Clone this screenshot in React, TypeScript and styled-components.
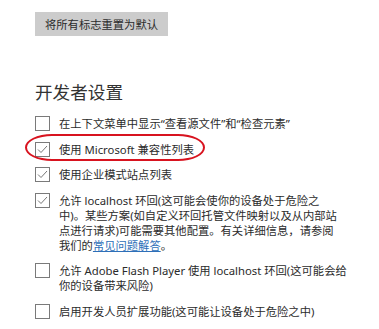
import styled, { createGlobalStyle } from "styled-components";

const GlobalStyle = createGlobalStyle`
    html, body {
        margin: 0;
        padding: 0;
        background: #ffffff;
    }
    body {
        font-family: "Noto Sans", "Noto Sans CJK SC", sans-serif;
        color: #2b2b2b;
    }
`;

const Page = styled.div`
    padding: 12px 0 0 35px;
    width: 379px;
    height: 329px;
    box-sizing: border-box;
    overflow: hidden;
`;

const ResetButton = styled.button`
    display: flex;
    align-items: center;
    justify-content: center;
    width: 133px;
    height: 24px;
    padding: 0;
    border: none;
    background: #cccccc;
    color: #2b2b2b;
    font-family: "Noto Sans CJK SC", sans-serif;
    font-size: 11.3px;
`;

const Heading = styled.h2`
    margin: 44px 0 12px;
    font-family: "Noto Sans CJK SC", sans-serif;
    font-weight: 400;
    font-size: 17.6px;
    line-height: 24px;
    color: #333333;
`;

const List = styled.div`
    display: flex;
    flex-direction: column;
    gap: 10.5px;
`;

const Row = styled.label`
    position: relative;
    display: flex;
    align-items: flex-start;
    gap: 9px;
`;

const Box = styled.span`
    flex: none;
    width: 15px;
    height: 15px;
    box-sizing: border-box;
    border: 1px solid #7a7a7a;
    background: #ffffff;
    display: flex;
    align-items: center;
    justify-content: center;
`;

const Label = styled.span`
    font-size: 11.3px;
    line-height: 15px;
    white-space: nowrap;
    color: #2b2b2b;
`;

const Link = styled.a`
    color: #2e6fb8;
    text-decoration: underline;
`;

const Highlight = styled.span`
    position: absolute;
    left: -10px;
    top: -8px;
    width: 180px;
    height: 27px;
    box-sizing: border-box;
    border: 2px solid #d8131f;
    border-radius: 28px / 14px;
    pointer-events: none;
`;

function Check({ checked }: { checked: boolean }) {
    return (
        <Box>
            {checked && (
                <svg width="13" height="13" viewBox="0 0 13 13">
                    <path d="M2 6.5 L5 9.5 L11 3" fill="none" stroke="#777777" strokeWidth="1" />
                </svg>
            )}
        </Box>
    );
}

export default function App() {
    return (
        <>
            <GlobalStyle />
            <Page>
                <ResetButton>将所有标志重置为默认</ResetButton>
                <Heading>开发者设置</Heading>
                <List>
                    <Row>
                        <Check checked={false} />
                        <Label>在上下文菜单中显示“查看源文件”和“检查元素”</Label>
                    </Row>
                    <Row>
                        <Check checked={true} />
                        <Label>使用 Microsoft 兼容性列表</Label>
                        <Highlight />
                    </Row>
                    <Row>
                        <Check checked={true} />
                        <Label>使用企业模式站点列表</Label>
                    </Row>
                    <Row>
                        <Check checked={true} />
                        <Label>
                            允许 localhost 环回(这可能会使你的设备处于危险之
                            <br />
                            中)。某些方案(如自定义环回托管文件映射以及从内部站
                            <br />
                            点进行请求)可能需要其他配置。有关详细信息，请参阅
                            <br />
                            我们的<Link>常见问题解答</Link>。
                        </Label>
                    </Row>
                    <Row>
                        <Check checked={false} />
                        <Label>
                            允许 Adobe Flash Player 使用 localhost 环回(这可能会给
                            <br />
                            你的设备带来风险)
                        </Label>
                    </Row>
                    <Row>
                        <Check checked={false} />
                        <Label>启用开发人员扩展功能(这可能让设备处于危险之中)</Label>
                    </Row>
                </List>
            </Page>
        </>
    );
}
